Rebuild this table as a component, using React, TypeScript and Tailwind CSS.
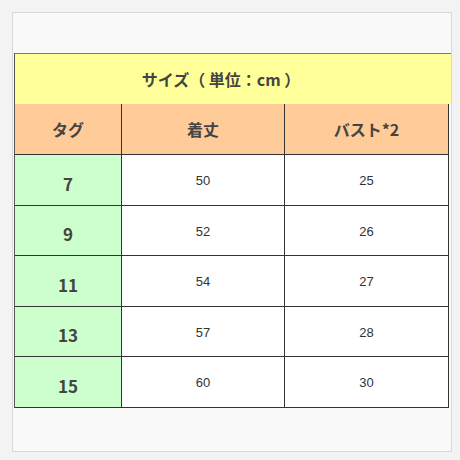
import React from 'react';

const rows = [
  { tag: '7', length: '50', bust: '25' },
  { tag: '9', length: '52', bust: '26' },
  { tag: '11', length: '54', bust: '27' },
  { tag: '13', length: '57', bust: '28' },
  { tag: '15', length: '60', bust: '30' },
];

const jp = "font-['Noto_Sans_CJK_JP','Noto_Sans',sans-serif]";

const App: React.FC = () => {
  return (
    <div className="w-[460px] h-[460px] bg-[#f3f3f3] pt-[12px] pl-[12px]">
      <div className="w-[440px] h-[440px] border border-[#dadada] bg-[#f9f9f9] pt-[40px]">
        <div className="ml-[1px] w-[437px] border-l border-[#555]">
          {/* Title */}
          <div
            className={`h-[51px] bg-[#ffff99] border-t border-[#7a7a7a] flex items-center justify-center pr-[24px] text-[16px] font-bold text-[#444] whitespace-pre ${jp}`}
          >
            サイズ（ 単位：cm ）
          </div>

          {/* Header + body */}
          <div className="grid grid-cols-[107px_163px_164px]">
            {['タグ', '着丈', 'バスト*2'].map((h) => (
              <div
                key={h}
                className={`h-[51px] bg-[#ffcc99] border-r border-b border-[#333] flex items-center justify-center text-[16px] font-bold text-[#444] ${jp}`}
              >
                {h}
              </div>
            ))}
            {rows.map((r) => (
              <React.Fragment key={r.tag}>
                <div
                  className={`h-[50.6px] bg-[#ccffcc] border-r border-b border-[#333] flex items-center justify-center pt-[7px] text-[17px] font-bold text-[#444] ${jp}`}
                >
                  {r.tag}
                </div>
                <div className="h-[50.6px] bg-white border-r border-b border-[#333] flex items-center justify-center pt-[2px] text-[13px] text-[#333] font-['Liberation_Sans',Arial,sans-serif]">
                  {r.length}
                </div>
                <div className="h-[50.6px] bg-white border-r border-b border-[#333] flex items-center justify-center pt-[2px] text-[13px] text-[#333] font-['Liberation_Sans',Arial,sans-serif]">
                  {r.bust}
                </div>
              </React.Fragment>
            ))}
          </div>
        </div>
      </div>
    </div>
  );
};

export default App;
